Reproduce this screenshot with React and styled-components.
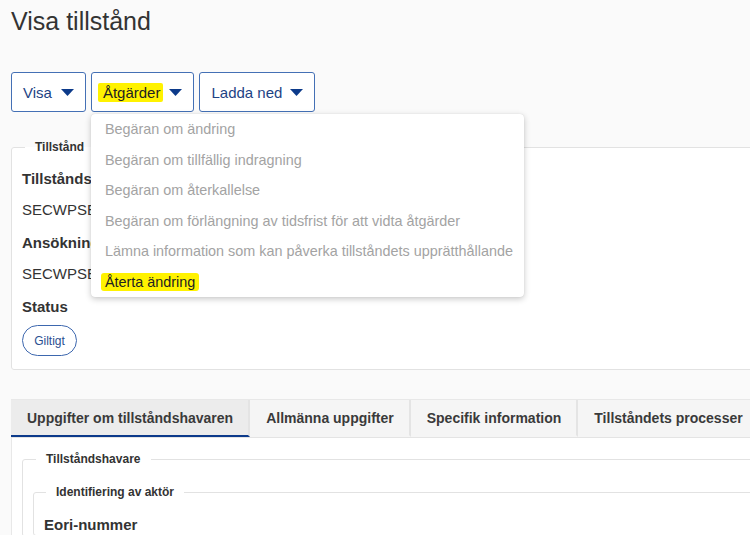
import React from 'react'
import styled, { createGlobalStyle } from 'styled-components';

const Global = createGlobalStyle`
    html, body {
        margin: 0;
        padding: 0;
        background: #fafafa;
        overflow: hidden;
        font-family: "Liberation Sans", Arial, sans-serif;
        color: #333;
    }
`;

const Page = styled.div`
    width: 800px;
    padding: 0 0 0 11px;
`;

const Title = styled.h1`
    margin: 7px 0 0;
    font-size: 25px;
    line-height: 29px;
    font-weight: normal;
    color: #333;
`;

const Toolbar = styled.div`
    display: flex;
    gap: 5px;
    margin-top: 36px;
`;

const MenuWrap = styled.div`
    position: relative;
`;

const MenuButton = styled.button`
    display: flex;
    align-items: center;
    gap: ${p => p.$gap || 8}px;
    height: 40px;
    padding: 0 11px 0 11px;
    background: #fff;
    border: 1px solid #4470b5;
    border-radius: 3px;
    font-family: inherit;
    font-size: 15px;
    color: #1d4384;
    cursor: pointer;
`;

const Mark = styled.span`
    background: #fff200;
    padding: 1px 3px 1px 5px;
    margin-left: -5px;
    margin-right: -3px;
    border-radius: 2px;
    color: #222;
`;

const Caret = () => (
    <svg width="13" height="7" viewBox="0 0 13 7">
        <path d="M0 0 H13 L6.5 7 Z" fill="#0c3a8a" />
    </svg>
);

const Dropdown = styled.ul`
    position: absolute;
    top: 42px;
    left: 0;
    width: 433px;
    margin: 0;
    padding: 0;
    list-style: none;
    background: #fff;
    border-radius: 4px;
    box-shadow: 0 2px 6px rgba(0,0,0,0.22), 0 0 1px rgba(0,0,0,0.15);
    z-index: 10;
`;

const Item = styled.li`
    height: 30.5px;
    display: flex;
    align-items: center;
    padding-left: 14px;
    font-size: 14.4px;
    color: ${p => p.$active ? '#222' : '#a3a3a3'};
    white-space: nowrap;
`;

const ItemMark = styled.span`
    background: #fff200;
    padding: 1px 4px;
    margin-left: -4px;
    border-radius: 3px;
`;

const Fieldset = styled.fieldset`
    margin: ${p => p.$mt || 0}px 0 0;
    padding: 0 10px ${p => p.$pb || 0}px;
    background: #fff;
    border: 1px solid #e2e2e2;
    border-radius: 3px;
    min-width: 0;
`;

const Legend = styled.legend`
    margin-left: ${p => p.$ml ?? 3}px;
    padding: 0 10px;
    font-size: 12px;
    line-height: 14px;
    font-weight: bold;
    color: #333;
`;

const Label = styled.div`
    margin-top: ${p => p.$mt || 13}px;
    font-size: 15px;
    line-height: 20px;
    font-weight: bold;
    color: #333;
`;

const Value = styled.div`
    margin-top: 11px;
    font-size: 15px;
    line-height: 20px;
    color: #333;
`;

const Pill = styled.span`
    display: inline-flex;
    align-items: center;
    justify-content: center;
    margin-top: 8px;
    width: 55px;
    height: 31px;
    box-sizing: border-box;
    border: 1.5px solid #3d67ae;
    border-radius: 16px;
    font-size: 12px;
    color: #2b4f91;
`;

const Tabs = styled.div`
    display: flex;
    margin-top: 29px;
    height: 39px;
    border-top: 1px solid #e8e8e8;
    border-bottom: 1px solid #e4e4e4;
    box-sizing: border-box;
`;

const Tab = styled.div`
    display: flex;
    align-items: center;
    padding: 0 15px 0 16px;
    background: ${p => p.$active ? '#ececec' : '#f5f5f5'};
    border-right: 2px solid #e4e4e4;
    border-bottom: 2px solid ${p => p.$active ? '#0c3a8a' : 'transparent'};
    font-size: 14px;
    font-weight: bold;
    color: #3a3a3a;
    white-space: nowrap;
`;

const Panel = styled.div`
    background: #fff;
    border-left: 1px solid #e8e8e8;
    padding: 14px 0 40px 10px;
`;

function App() {
    return (
        <Page>
            <Global />
            <Title>Visa tillstånd</Title>
            <Toolbar>
                <MenuButton $gap={9}>Visa <Caret /></MenuButton>
                <MenuWrap>
                    <MenuButton $gap={9}><Mark>Åtgärder</Mark><Caret /></MenuButton>
                    <Dropdown>
                        <Item>Begäran om ändring</Item>
                        <Item>Begäran om tillfällig indragning</Item>
                        <Item>Begäran om återkallelse</Item>
                        <Item>Begäran om förlängning av tidsfrist för att vidta åtgärder</Item>
                        <Item>Lämna information som kan påverka tillståndets upprätthållande</Item>
                        <Item $active><ItemMark>Återta ändring</ItemMark></Item>
                    </Dropdown>
                </MenuWrap>
                <MenuButton>Ladda ned <Caret /></MenuButton>
            </Toolbar>

            <Fieldset $mt={28} $pb={13}>
                <Legend>Tillstånd</Legend>
                <Label $mt={15}>Tillståndsnummer</Label>
                <Value>SECWPSE0001234</Value>
                <Label>Ansökningsnummer</Label>
                <Value>SECWPSE0005678</Value>
                <Label>Status</Label>
                <Pill>Giltigt</Pill>
            </Fieldset>

            <Tabs>
                <Tab $active>Uppgifter om tillståndshavaren</Tab>
                <Tab>Allmänna uppgifter</Tab>
                <Tab>Specifik information</Tab>
                <Tab>Tillståndets processer</Tab>
            </Tabs>
            <Panel>
                <Fieldset>
                    <Legend $ml={3}>Tillståndshavare</Legend>
                    <Fieldset $mt={19}>
                        <Legend $ml={2}>Identifiering av aktör</Legend>
                        <Label $mt={16}>Eori-nummer</Label>
                    </Fieldset>
                </Fieldset>
            </Panel>
        </Page>
    )
}

export default App
